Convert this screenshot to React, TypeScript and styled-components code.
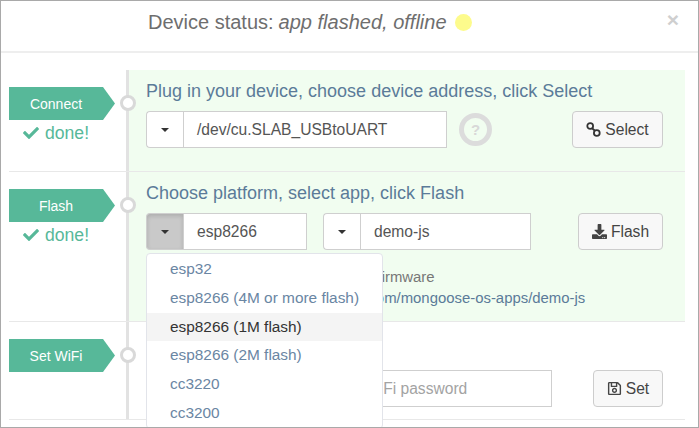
import React from 'react';
import styled, { createGlobalStyle } from 'styled-components';
import { FaCheck, FaDownload, FaRegSave } from 'react-icons/fa';

const GlobalStyle = createGlobalStyle`
  html, body {
    margin: 0;
    padding: 0;
    background: #fff;
    font-family: "Liberation Sans", Arial, sans-serif;
  }
  * { box-sizing: border-box; }
`;

const Win = styled.div`
  position: relative;
  width: 699px;
  height: 428px;
  border: 1px solid #a9a9a9;
  background: #fff;
  overflow: hidden;
`;

const Header = styled.div`
  height: 52px;
  border-bottom: 2px solid #eeeeee;
  display: flex;
  align-items: center;
  position: relative;
  padding: 0 0 8px 147px;
  font-size: 20px;
  color: #6e6e6e;
  em { margin-left: 5px; }
`;

const Dot = styled.span`
  width: 17px;
  height: 17px;
  border-radius: 50%;
  background: #fdfb8c;
  margin-left: 8px;
`;

const Close = styled.span`
  position: absolute;
  right: 19px;
  top: 7px;
  font-size: 21px;
  font-weight: bold;
  color: #cfcfcf;
`;

const Steps = styled.div`
  padding: 17px 13px 0 8px;
`;

const Step = styled.div<{ $h: number }>`
  display: flex;
  height: ${p => p.$h}px;
  border-bottom: 1px solid #e8e8e8;
`;

const Side = styled.div`
  width: 117px;
  flex: none;
  padding-top: 17px;
  display: flex;
  flex-direction: column;
`;

const Tag = styled.div`
  width: 106px;
  height: 33px;
  background: #57b899;
  clip-path: polygon(0 0, 94px 0, 106px 50%, 94px 100%, 0 100%);
  color: #fff;
  font-size: 14px;
  display: flex;
  align-items: center;
  justify-content: center;
  padding-right: 12px;
`;

const Done = styled.div`
  margin: 1px 0 0 14px;
  display: flex;
  align-items: center;
  gap: 6px;
  font-size: 17.6px;
  line-height: 24px;
  color: #57b899;
`;

const Rail = styled.div`
  width: 3px;
  flex: none;
  background: #e2e2e2;
  position: relative;
`;

const Knob = styled.span<{ $top: number }>`
  position: absolute;
  left: -6px;
  top: ${p => p.$top}px;
  width: 16px;
  height: 16px;
  border-radius: 50%;
  background: #fff;
  border: 3px solid #d9d9d9;
`;

const Body = styled.div<{ $green?: boolean }>`
  flex: 1;
  padding: 10px 22px 0 17px;
  background: ${p => (p.$green ? '#f1fdf0' : 'transparent')};
`;

const Title = styled.div`
  font-size: 18px;
  line-height: 22px;
  color: #5b7b99;
`;

const Row = styled.div<{ $top?: number }>`
  display: flex;
  align-items: center;
  margin-top: ${p => p.$top ?? 9}px;
`;

const Group = styled.div<{ $w: number; $gap?: number }>`
  display: flex;
  width: ${p => p.$w}px;
  height: 37px;
  margin-right: ${p => p.$gap ?? 0}px;
`;

const Caret = styled.button<{ $open?: boolean }>`
  width: 37px;
  flex: none;
  padding: 0;
  display: flex;
  align-items: center;
  justify-content: center;
  background: ${p => (p.$open ? '#c9c9c9' : '#fff')};
  border: 1px solid #cfcfcf;
  border-right: 0;
  border-radius: 4px 0 0 4px;
  box-shadow: ${p => (p.$open ? 'inset 0 2px 4px rgba(0,0,0,.14)' : 'none')};
  &::after {
    content: '';
    border-top: 4px solid #333;
    border-left: 4px solid transparent;
    border-right: 4px solid transparent;
  }
`;

const Field = styled.div<{ $muted?: boolean }>`
  flex: 1;
  border: 1px solid #cfcfcf;
  background: #fff;
  padding: 0 13px;
  font-size: 15.6px;
  line-height: 35px;
  color: ${p => (p.$muted ? '#a3a3a3' : '#555')};
  white-space: nowrap;
  overflow: hidden;
`;

const Help = styled.span`
  width: 33px;
  height: 33px;
  margin-left: 12px;
  border-radius: 50%;
  border: 5px solid #dcdcdc;
  color: #d8d8d8;
  font-size: 15px;
  font-weight: bold;
  display: flex;
  align-items: center;
  justify-content: center;
`;

const Btn = styled.button<{ $w: number }>`
  width: ${p => p.$w}px;
  height: 37px;
  margin-left: auto;
  padding: 0;
  display: flex;
  align-items: center;
  justify-content: center;
  gap: 4px;
  border: 1px solid #cdcdcd;
  border-radius: 4px;
  background: #f8f8f8;
  color: #444;
  font-family: inherit;
  font-size: 15.6px;
`;

const Info = styled.div`
  margin: 17px 0 0 133px;
  font-size: 14.9px;
  line-height: 21px;
  color: #777;
  white-space: nowrap;
  a { color: #5b7b99; text-decoration: none; }
`;

const Menu = styled.div`
  position: absolute;
  left: 145px;
  top: 252px;
  width: 237px;
  background: #fff;
  border: 1px solid #e2e4ea;
  border-radius: 4px;
  padding: 1px 0 0;
`;

const Item = styled.div<{ $hover?: boolean }>`
  height: 28.8px;
  padding-left: 23px;
  font-size: 15.4px;
  line-height: 28.8px;
  color: ${p => (p.$hover ? '#333' : '#6a86a3')};
  background: ${p => (p.$hover ? '#f4f4f4' : 'transparent')};
`;

const LinkIcon = () => (
  <svg width="15" height="15" viewBox="0 0 15 15" fill="none" stroke="#333" strokeWidth="1.8">
    <circle cx="4.2" cy="4" r="2.9" />
    <circle cx="10.8" cy="11" r="2.9" />
    <path d="M6 6.2 9 8.8" />
  </svg>
);

const platforms = ['esp32', 'esp8266 (4M or more flash)', 'esp8266 (1M flash)', 'esp8266 (2M flash)', 'cc3220', 'cc3200'];

export default function App() {
  return (
    <Win>
      <GlobalStyle />
      <Header>
        Device status: <em>app flashed, offline</em>
        <Dot />
        <Close>×</Close>
      </Header>
      <Steps>
        <Step $h={102}>
          <Side>
            <Tag>Connect</Tag>
            <Done><FaCheck size={16} /> done!</Done>
          </Side>
          <Rail><Knob $top={25} /></Rail>
          <Body $green>
            <Title>Plug in your device, choose device address, click Select</Title>
            <Row>
              <Group $w={301}>
                <Caret />
                <Field>/dev/cu.SLAB_USBtoUART</Field>
              </Group>
              <Help>?</Help>
              <Btn $w={91}><LinkIcon /> Select</Btn>
            </Row>
          </Body>
        </Step>
        <Step $h={150}>
          <Side>
            <Tag>Flash</Tag>
            <Done><FaCheck size={16} /> done!</Done>
          </Side>
          <Rail><Knob $top={25} /></Rail>
          <Body $green>
            <Title>Choose platform, select app, click Flash</Title>
            <Row>
              <Group $w={161} $gap={16}>
                <Caret $open />
                <Field>esp8266</Field>
              </Group>
              <Group $w={208}>
                <Caret />
                <Field>demo-js</Field>
              </Group>
              <Btn $w={85}><FaDownload size={15} /> Flash</Btn>
            </Row>
            <Info>
              Demo JS app: firmware
              <br />
              <a href="#">https://github.com/mongoose-os-apps/demo-js</a>
            </Info>
          </Body>
        </Step>
        <Step $h={98}>
          <Side>
            <Tag>Set WiFi</Tag>
          </Side>
          <Rail><Knob $top={25} /></Rail>
          <Body>
            <Row $top={38}>
              <Group $w={195} $gap={10}>
                <Field $muted />
              </Group>
              <Group $w={201}>
                <Field $muted>WiFi password</Field>
              </Group>
              <Btn $w={70}><FaRegSave size={15} /> Set</Btn>
            </Row>
          </Body>
        </Step>
      </Steps>
      <Menu>
        {platforms.map((p, i) => (
          <Item key={p} $hover={i === 2}>{p}</Item>
        ))}
      </Menu>
    </Win>
  );
}
